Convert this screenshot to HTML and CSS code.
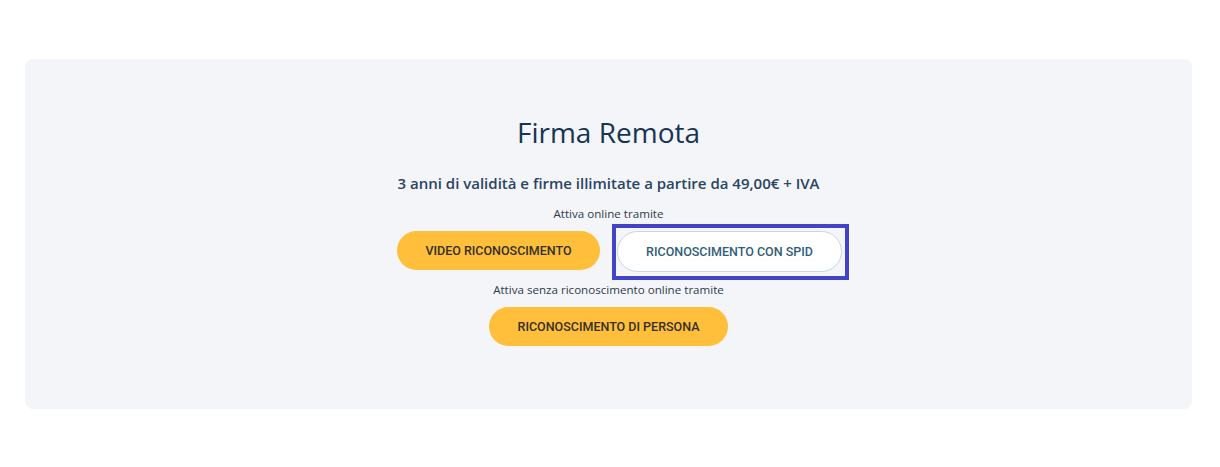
FILE: index.html
```html
<!DOCTYPE html>
<html lang="it">
<head>
  <meta charset="UTF-8" />
  <meta name="viewport" content="width=device-width, initial-scale=1.0"/>
  <title>Firma Remota</title>
  <link rel="stylesheet" href="styles.css">
</head>
<body>

  <div class="card">
    <h2>Firma Remota</h2>
    <p class="subtitle">3 anni di validità e firme illimitate a partire da 49,00€ + IVA</p>

    <p class="hint">Attiva online tramite</p>
    <div class="row">
      <button class="btn btn-yellow">VIDEO RICONOSCIMENTO</button>
      <button class="btn btn-white selected">RICONOSCIMENTO CON SPID</button>
    </div>

    <p class="hint hint-second">Attiva senza riconoscimento online tramite</p>
    <div class="row row-center">
      <button class="btn btn-yellow btn-wide">RICONOSCIMENTO DI PERSONA</button>
    </div>
  </div>

</body>
</html>
```

FILE: styles.css
```css
body {
  margin: 0;
  padding: 59px 28px 0 25px;
  font-family: 'Open Sans', sans-serif;
  background: #fff;
}

.card {
  background: #f4f5f9;
  border-radius: 8px;
  height: 350px;
  box-sizing: border-box;
  padding-top: 55px;
  text-align: center;
}

h2 {
  margin: 0;
  font-size: 28px;
  font-weight: 400;
  line-height: 36px;
  color: #163456;
}

.subtitle {
  margin: 23px 0 0;
  font-size: 15px;
  font-weight: 600;
  line-height: 20px;
  color: #2a4462;
}

.hint {
  margin: 13px 0 0;
  font-size: 11.6px;
  line-height: 15px;
  color: #2f3b4a;
}

.hint-second {
  margin-top: 10px;
}

.row {
  display: flex;
  justify-content: center;
  align-items: flex-start;
  gap: 17px;
  margin-top: 10px;
  padding-left: 22px;
}

.row-center {
  padding-left: 0;
  margin-top: 10px;
}

.btn {
  font-family: Roboto, sans-serif;
  font-size: 12.5px;
  font-weight: 500;
  height: 39px;
  padding: 0 20px;
  border: none;
  border-radius: 20px;
  cursor: pointer;
}

.btn-yellow {
  background: #ffbf3a;
  color: #33302a;
  width: 203px;
}

.btn-wide {
  width: 239px;
}

.btn-white {
  background: #fff;
  color: #2f5e7a;
  border: 1px solid #c9d6e2;
  height: 41px;
  width: 225px;
  border-radius: 21px;
}

/* focus box drawn over the button */
.selected {
  position: relative;
}

.selected::after {
  content: "";
  position: absolute;
  top: -8px;
  left: -6px;
  right: -8px;
  bottom: -9px;
  border: 4px solid #4343c6;
}
```
